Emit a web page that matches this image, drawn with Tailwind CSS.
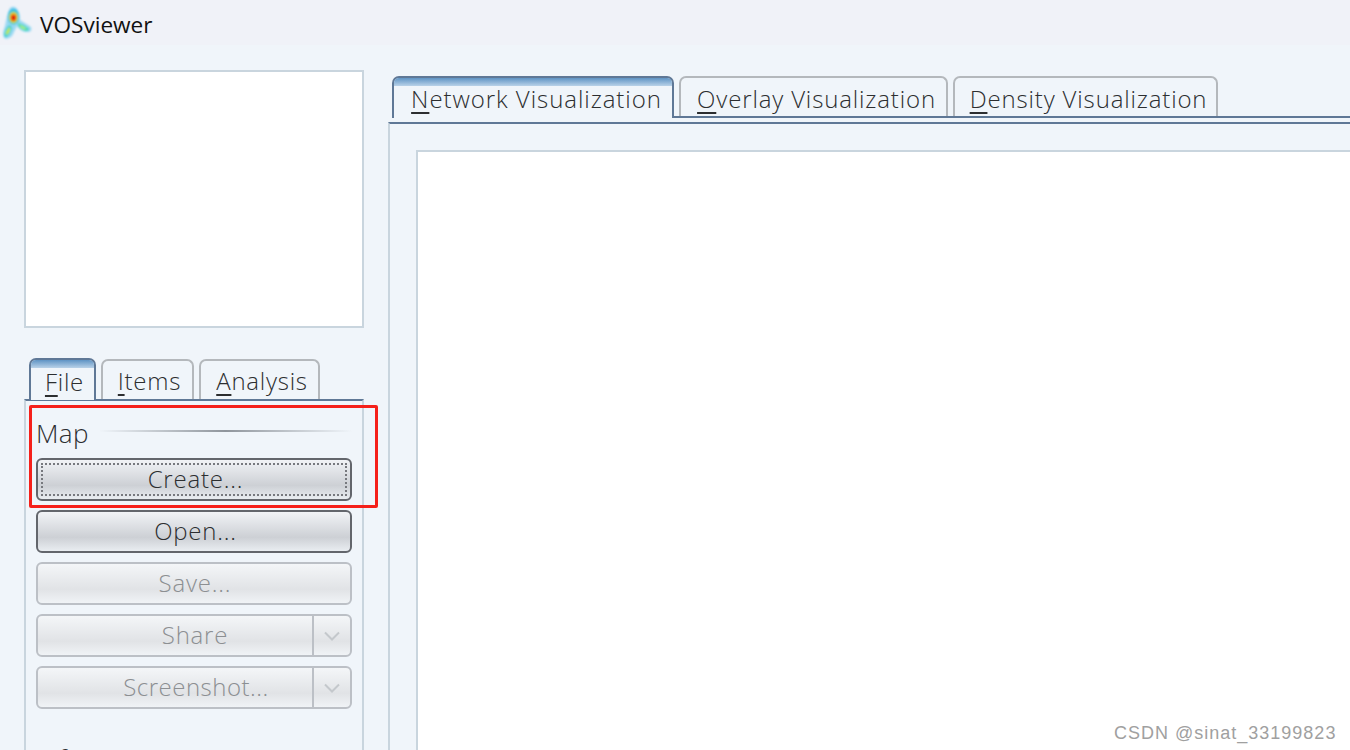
<!DOCTYPE html>
<html lang="en">
<head>
    <meta charset="UTF-8">
    <meta name="viewport" content="width=device-width, initial-scale=1.0">
    <script src="https://cdn.jsdelivr.net/npm/@tailwindcss/browser@4"></script>
    <title>VOSviewer</title>
</head>
<body class="relative h-[750px] overflow-hidden bg-[#f0f5fa] font-['Open_Sans',sans-serif] font-light tracking-[0.75px] text-[#2c2e30]">
    <!-- title bar -->
    <header class="flex h-[45px] items-center bg-[#f0f2f8]">
        <svg width="36" height="45" viewBox="0 0 36 45" class="mr-[4px]">
            <defs>
                <filter id="soft" x="-20%" y="-20%" width="140%" height="140%"><feGaussianBlur stdDeviation="0.9"/></filter>
            </defs>
            <g filter="url(#soft)">
                <!-- halo -->
                <path d="M10 8 Q14 5 17 9 Q20 14 20 20 L31 27 Q33 32 27 32 Q21 32 17 26 L12 36 Q8 40 4 38 Q2 33 5 26 Q7 15 10 8Z" fill="#9ad8f2"/>
                <!-- left leg -->
                <path d="M10 25 Q13 27 11 31 Q8 38 5 37 Q3 35 5 31 Q7 26 10 25Z" fill="#2ed0d8"/>
                <path d="M9.5 27 Q11 28 10 31 Q8 35 6 35 Q5 33 6.5 31 Q8 28 9.5 27Z" fill="#c4e850"/>
                <!-- right leg -->
                <path d="M18 23 Q25 25 29 29 Q29 31 25 31 Q20 29 18 26Z" fill="#30d8c0"/>
                <path d="M19 24.5 Q24 26 27 29 Q24 30 21 28Z" fill="#b0ee80"/>
                <!-- head -->
                <ellipse cx="13.5" cy="16.5" rx="5.8" ry="8" fill="#30c0e8"/>
                <ellipse cx="13.5" cy="17.5" rx="4.6" ry="6" fill="#9ce040"/>
                <ellipse cx="13.5" cy="17.5" rx="3.7" ry="4.6" fill="#f4b020"/>
                <ellipse cx="13.5" cy="17.8" rx="2.4" ry="3" fill="#e0200f"/>
            </g>
        </svg>
        <span class="translate-y-[2px] text-[22.6px] font-normal tracking-normal text-[#111]">VOSviewer</span>
    </header>

    <main class="flex pt-[25px]">
        <!-- left column -->
        <aside class="ml-[24px] w-[340px] shrink-0">
            <div class="h-[258px] border-2 border-[#c9d5de] bg-white"></div>

            <div class="ml-[5px] mt-[30px] flex gap-[5px] text-[24px] leading-none">
                <div class="relative z-10 -mb-[1px] h-[42px] w-[67px] overflow-hidden rounded-t-[7px] border-2 border-b-0 border-[#5f7896] bg-[#f0f5fa]">
                    <div class="h-[8px] bg-gradient-to-b from-[#5f94c4] to-[#b9d2e8]"></div>
                    <div class="pl-[4px] pt-[2px] text-center"><span class="underline underline-offset-[4px] decoration-2">F</span>ile</div>
                </div>
                <div class="mt-px h-[40px] w-[93px] rounded-t-[7px] border-2 border-b-0 border-[#b4b8bc] pl-[4px] pt-[8px] text-center"><span class="underline underline-offset-[4px] decoration-2">I</span>tems</div>
                <div class="mt-px h-[40px] w-[121px] rounded-t-[7px] border-2 border-b-0 border-[#b4b8bc] pl-[5px] pt-[8px] text-center"><span class="underline underline-offset-[4px] decoration-2">A</span>nalysis</div>
            </div>

            <section class="h-[400px] border-x-2 border-t-2 border-x-[#c9d5de] border-t-[#5f7896] px-[10px] pt-[17px] tracking-[0.35px]">
                <div class="flex h-[30px] items-center gap-[10px] text-[26px] leading-none">
                    <span>Map</span>
                    <div class="h-[2px] flex-1 -translate-y-[2px] bg-gradient-to-r from-transparent via-[#8f959c] to-transparent"></div>
                </div>
                <div class="mt-[10px] flex flex-col gap-[9px] text-[24px] leading-none tracking-[0.8px]">
                    <div class="flex h-[43px] items-center justify-center rounded-[6px] border-2 border-[#63666c] bg-gradient-to-b from-[#f1f3f6] via-[#cdd0d5] via-65% to-[#e9edf1] p-[3px]">
                        <div class="flex h-full w-full items-center justify-center border-2 border-dotted border-[#77797e] pb-[2px] pl-[3px]">Create...</div>
                    </div>
                    <div class="flex h-[43px] items-center justify-center rounded-[6px] border-2 border-[#63666c] bg-gradient-to-b from-[#f1f3f6] via-[#cdd0d5] via-65% to-[#e9edf1] pb-[2px] pl-[3px]">Open...</div>
                    <div class="flex h-[43px] items-center justify-center rounded-[6px] border-2 border-[#bcc0c6] bg-gradient-to-b from-[#f4f6f8] via-[#e1e3e6] via-65% to-[#f0f3f6] pb-[2px] pl-[2px] text-[#8c8f92]">Save...</div>
                    <div class="flex h-[43px] rounded-[6px] border-2 border-[#bcc0c6] bg-gradient-to-b from-[#f4f6f8] via-[#e1e3e6] via-65% to-[#f0f3f6] text-[#8c8f92]">
                        <div class="flex flex-1 items-center justify-center border-r-2 border-[#bcc0c6] pb-[2px] pl-[40px]">Share</div>
                        <div class="flex w-[36px] items-center justify-center">
                            <svg width="16" height="10" viewBox="0 0 16 10" fill="none" stroke="#c4c8cc" stroke-width="2"><path d="M1 1.5 L8 8.5 L15 1.5"/></svg>
                        </div>
                    </div>
                    <div class="flex h-[43px] rounded-[6px] border-2 border-[#bcc0c6] bg-gradient-to-b from-[#f4f6f8] via-[#e1e3e6] via-65% to-[#f0f3f6] text-[#8c8f92]">
                        <div class="flex flex-1 items-center justify-center border-r-2 border-[#bcc0c6] pb-[2px] pl-[42px] tracking-[0.5px]">Screenshot...</div>
                        <div class="flex w-[36px] items-center justify-center">
                            <svg width="16" height="10" viewBox="0 0 16 10" fill="none" stroke="#c4c8cc" stroke-width="2"><path d="M1 1.5 L8 8.5 L15 1.5"/></svg>
                        </div>
                    </div>
                </div>
                <div class="mt-[37px] text-[26px] leading-none">Info</div>
            </section>
        </aside>

        <!-- right column -->
        <div class="ml-[24px] flex-1 pt-[6px]">
            <div class="ml-[4px] flex gap-[5px] border-b-2 border-[#5f7896] text-[24px] leading-none tracking-[0.85px]">
                <div class="relative z-10 -mb-[2px] h-[42px] w-[282px] overflow-hidden rounded-t-[7px] border-2 border-b-0 border-[#5f7896] bg-[#f0f5fa] tracking-[0.95px]">
                    <div class="h-[8px] bg-gradient-to-b from-[#5f94c4] to-[#b9d2e8]"></div>
                    <div class="pl-[7px] pt-[1px] text-center"><span class="underline underline-offset-[4px] decoration-2">N</span>etwork Visualization</div>
                </div>
                <div class="h-[40px] w-[269px] rounded-t-[7px] border-2 border-b-0 border-[#b4b8bc] pl-[6px] pt-[9px] text-center"><span class="underline underline-offset-[4px] decoration-2">O</span>verlay Visualization</div>
                <div class="h-[40px] w-[265px] rounded-t-[7px] border-2 border-b-0 border-[#b4b8bc] pl-[6px] pt-[9px] text-center"><span class="underline underline-offset-[4px] decoration-2">D</span>ensity Visualization</div>
            </div>
            <section class="mt-[4px] h-[640px] border-l-2 border-t-2 border-l-[#c9d5de] border-t-[#5f7896] pl-[26px] pt-[26px]">
                <div class="h-full border-l-2 border-t-2 border-[#c9d5de] bg-white"></div>
            </section>
        </div>
    </main>

    <!-- red annotation -->
    <div class="absolute left-[29px] top-[405px] h-[103px] w-[349px] rounded-[2px] border-[3px] border-[#f5201a]"></div>
    <!-- watermark -->
    <div class="absolute left-[1114px] top-[720px] font-['Liberation_Sans',sans-serif] text-[18px] font-normal tracking-[1px] text-[#a0a0a0]">CSDN @sinat_33199823</div>
</body>
</html>
